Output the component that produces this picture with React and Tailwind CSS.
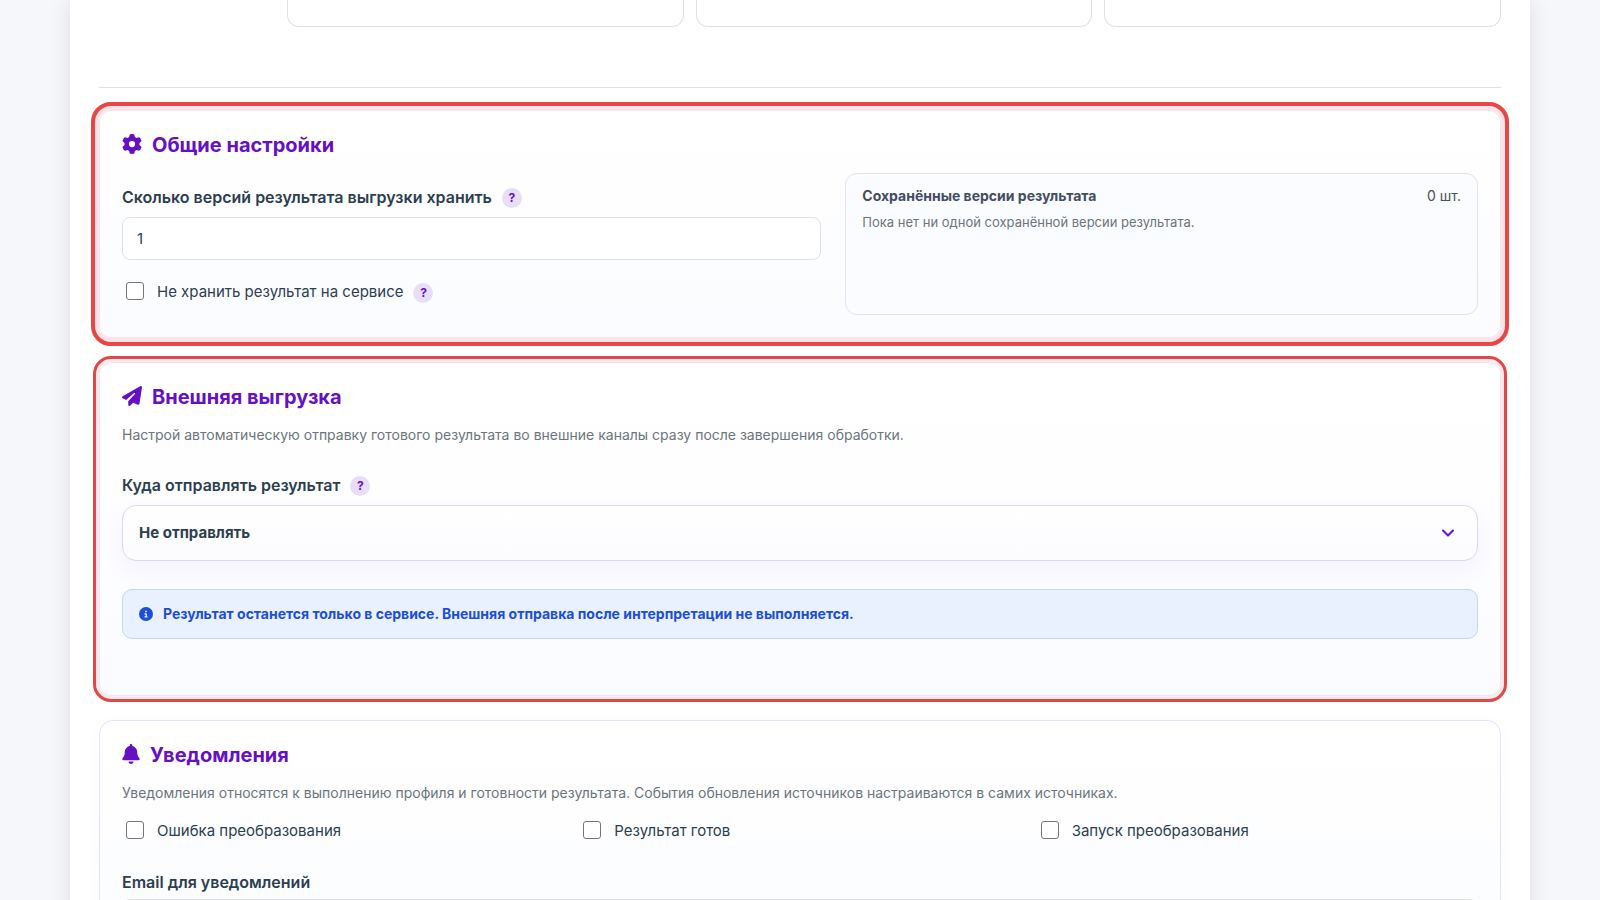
import { useState } from 'react';
import { FaGear, FaPaperPlane, FaBell, FaCircleInfo } from 'react-icons/fa6';
import { ChevronDown } from 'lucide-react';

const events = [
    { id: 'error', label: 'Ошибка преобразования' },
    { id: 'ready', label: 'Результат готов' },
    { id: 'start', label: 'Запуск преобразования' }
];

const HelpButton = () => (
    <button
        type="button"
        aria-label="Подсказка"
        className="mt-0.5 flex size-5 shrink-0 items-center justify-center rounded-full bg-[#e9def8] text-xs font-bold text-[#6a11cb]"
    >
        ?
    </button>
);

const SectionTitle = ({ icon: Icon, iconWidth = 'w-5', children }) => (
    <h2 className="flex items-center gap-2.5 text-xl leading-6 font-bold text-[#6610c4]">
        <Icon className={`-mt-0.5 h-5 shrink-0 ${iconWidth}`} />
        {children}
    </h2>
);

const Checkbox = ({ id, label }) => (
    <div className="flex items-center gap-[13px] pl-1">
        <input
            id={id}
            type="checkbox"
            className="-mt-0.5 size-[18px] shrink-0 appearance-none rounded-[3px] border border-[#767676] bg-white checked:bg-[#6a11cb]"
        />
        <label htmlFor={id} className="text-[15px] leading-6 text-[#2c3e50]">{label}</label>
    </div>
);

const App = () => {
    const [versions, setVersions] = useState('1');
    const [target, setTarget] = useState('none');

    return (
        <div className="h-screen overflow-hidden bg-[#f5f7fb] font-['Inter','Liberation_Sans',sans-serif] text-[#2c3e50]">
            <main className="mx-[70px] min-h-screen bg-white px-[29px] shadow-[0_0_20px_rgba(0,0,0,0.1)]">
                <div className="grid grid-cols-3 gap-3 pl-[188px]">
                    <div className="h-[27px] rounded-b-xl border border-t-0 border-[#dee2e6]"></div>
                    <div className="h-[27px] rounded-b-xl border border-t-0 border-[#dee2e6]"></div>
                    <div className="h-[27px] rounded-b-xl border border-t-0 border-[#dee2e6]"></div>
                </div>

                <hr className="mt-[60px] mb-[22px] border-[#dfe1e5]" />

                <section className="rounded-xl border border-[#eee6f8] bg-linear-to-b from-white to-[#fbfcff] p-[22px] shadow-[0_0_0_4px_#fde3e5] outline-4 outline-offset-4 outline-[#e84545]">
                    <SectionTitle icon={FaGear}>Общие настройки</SectionTitle>
                    <div className="mt-4 grid grid-cols-[21fr_19fr] gap-6">
                        <div className="pt-3">
                            <div className="flex items-center gap-2.5">
                                <label htmlFor="versions" className="leading-6 font-semibold">Сколько версий результата выгрузки хранить</label>
                                <HelpButton />
                            </div>
                            <input
                                id="versions"
                                type="text"
                                value={versions}
                                onChange={(e) => setVersions(e.target.value)}
                                className="mt-2 h-[43px] w-full rounded-lg border border-[#dee2e6] bg-white px-3.5 text-[15px] outline-none"
                            />
                            <div className="mt-5 flex items-center gap-2.5">
                                <Checkbox id="no-store" label="Не хранить результат на сервисе" />
                                <HelpButton />
                            </div>
                        </div>
                        <div className="min-h-[142px] rounded-xl border border-[#e3e0f3] bg-[#fbfcff] px-4 py-2.5">
                            <div className="flex items-center justify-between text-sm leading-6 text-[#495057]">
                                <strong className="font-bold text-[#434d63]">Сохранённые версии результата</strong>
                                <span>0 шт.</span>
                            </div>
                            <p className="mt-1 text-[13px] leading-5 text-[#6c757d]">Пока нет ни одной сохранённой версии результата.</p>
                        </div>
                    </div>
                </section>

                <section className="mt-6 rounded-xl border border-[#eee6f8] bg-linear-to-b from-white to-[#fbfcff] px-[22px] pt-[22px] pb-14 shadow-[0_0_0_3px_#fde8ea] outline-3 outline-offset-3 outline-[#de4848]">
                    <SectionTitle icon={FaPaperPlane}>Внешняя выгрузка</SectionTitle>
                    <p className="mt-4 text-sm leading-5 text-[#6c757d]">
                        Настрой автоматическую отправку готового результата во внешние каналы сразу после завершения обработки.
                    </p>
                    <div className="mt-7 flex items-center gap-2.5">
                        <label htmlFor="target" className="leading-6 font-semibold">Куда отправлять результат</label>
                        <HelpButton />
                    </div>
                    <div className="relative mt-2">
                        <select
                            id="target"
                            value={target}
                            onChange={(e) => setTarget(e.target.value)}
                            className="h-14 w-full appearance-none rounded-[14px] border border-[#dcd6ef] bg-linear-to-b from-white to-[#fcfcff] px-4 text-[15px] font-bold shadow-[0_10px_24px_rgba(106,17,203,0.05)] outline-none"
                        >
                            <option value="none">Не отправлять</option>
                        </select>
                        <ChevronDown size={20} strokeWidth={2.5} className="pointer-events-none absolute top-[18px] right-5 text-[#6a11cb]" />
                    </div>
                    <div className="mt-7 flex items-center gap-2.5 rounded-[10px] border border-[#c5d6f2] bg-[#e9f1ff] px-4 py-3 text-sm leading-6 font-bold text-[#1d4ed8]">
                        <FaCircleInfo className="shrink-0" />
                        Результат останется только в сервисе. Внешняя отправка после интерпретации не выполняется.
                    </div>
                </section>

                <section className="mt-6 rounded-[14px] border border-[#e6e3f6] bg-linear-to-b from-white to-[#fbfcff] p-[22px] shadow-[0_4px_16px_rgba(106,17,203,0.03)]">
                    <SectionTitle icon={FaBell} iconWidth="w-[18px]">Уведомления</SectionTitle>
                    <p className="mt-4 text-sm leading-5 text-[#6c757d]">
                        Уведомления относятся к выполнению профиля и готовности результата. События обновления источников настраиваются в самих источниках.
                    </p>
                    <div className="mt-4 grid grid-cols-3 gap-4">
                        {events.map((event) => (
                            <Checkbox key={event.id} id={event.id} label={event.label} />
                        ))}
                    </div>
                    <label htmlFor="email" className="mt-[27px] block leading-6 font-semibold">Email для уведомлений</label>
                    <input id="email" type="email" className="mt-[5px] h-[43px] w-full rounded-lg border border-[#dee2e6] bg-white px-3.5 text-[15px] outline-none" />
                </section>
            </main>
        </div>
    );
};

export default App;
